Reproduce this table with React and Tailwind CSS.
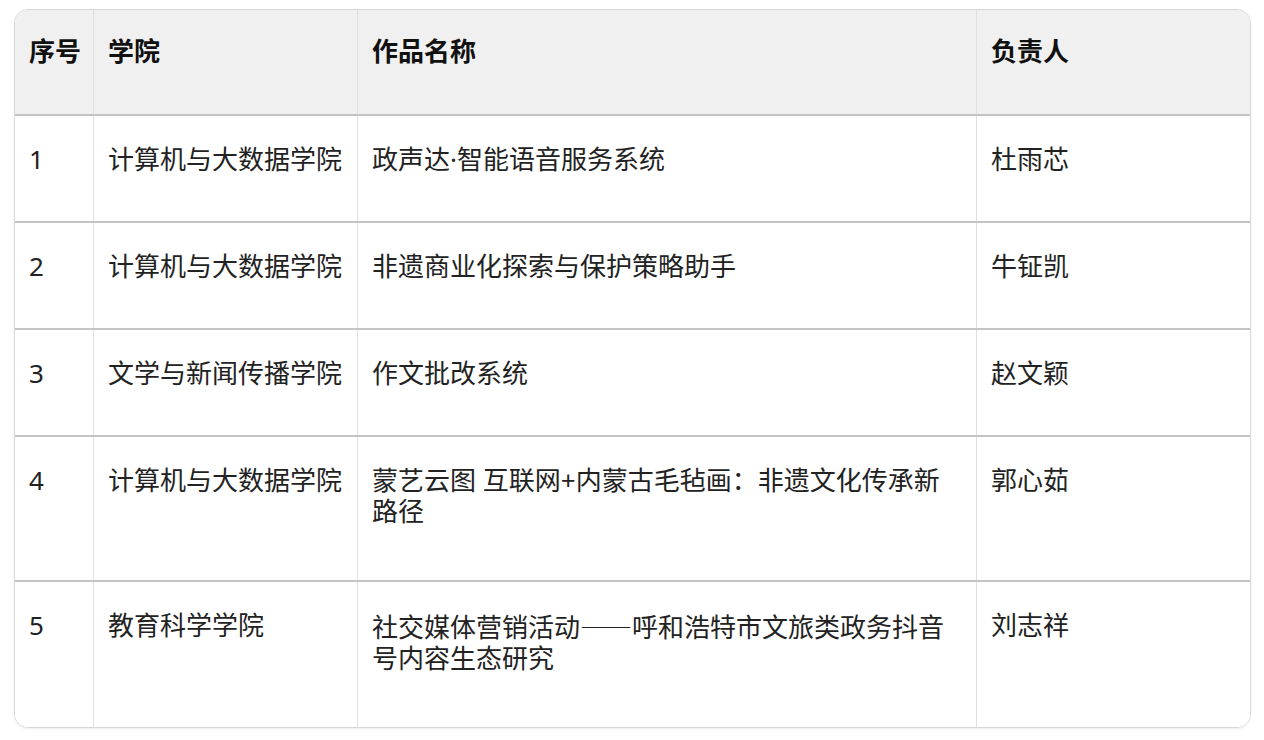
const rows = [
  { no: "1", college: "计算机与大数据学院", title: "政声达·智能语音服务系统", lead: "杜雨芯", tall: false },
  { no: "2", college: "计算机与大数据学院", title: "非遗商业化探索与保护策略助手", lead: "牛钲凯", tall: false },
  { no: "3", college: "文学与新闻传播学院", title: "作文批改系统", lead: "赵文颖", tall: false },
  { no: "4", college: "计算机与大数据学院", title: "蒙艺云图 互联网+内蒙古毛毡画：非遗文化传承新路径", lead: "郭心茹", tall: true },
  {
    no: "5",
    college: "教育科学学院",
    title: (
      <>
        社交媒体营销活动
        <span className="[font-feature-settings:'fwid']" style={{ fontFamily: '"Noto Sans CJK SC", sans-serif' }}>
          ——
        </span>
        呼和浩特市文旅类政务抖音号内容生态研究
      </>
    ),
    lead: "刘志祥",
    tall: true,
  },
];

const font = { fontFamily: '"Noto Sans", "Noto Sans CJK SC", sans-serif' };

function Row({ cells, header, tall, last }) {
  const height = header ? "h-[106px]" : tall ? "h-[145px]" : "h-[107px]";
  return (
    <div
      className={`grid grid-cols-[79px_264px_619px_1fr] ${height} ${
        last ? "" : "border-b-2 border-[#c4c4c4]"
      } ${header ? "bg-[#f0f0f0] font-bold text-[#111]" : "bg-white text-[#222]"}`}
    >
      {cells.map((c, i) => (
        <div
          key={i}
          className={`pl-[14px] pr-[15px] text-[26px] leading-[31px] ${header ? "pt-[26px]" : "pt-[28px]"} ${
            i === 0 ? "whitespace-nowrap pr-0" : ""
          } ${i < 3 ? "border-r border-[#e0e0e0]" : ""}`}
        >
          {c}
        </div>
      ))}
    </div>
  );
}

export default function App() {
  return (
    <div className="w-[1264px] h-[740px] bg-white pt-[9px] pl-[14px]" style={font}>
      <div className="w-[1237px] h-[719px] border border-[#d8d8d8] rounded-[14px] overflow-hidden shadow-[0_1px_2px_rgba(0,0,0,0.08)]">
        <Row header cells={["序号", "学院", "作品名称", "负责人"]} />
        {rows.map((r, i) => (
          <Row key={r.no} tall={r.tall} last={i === rows.length - 1} cells={[r.no, r.college, r.title, r.lead]} />
        ))}
      </div>
    </div>
  );
}
